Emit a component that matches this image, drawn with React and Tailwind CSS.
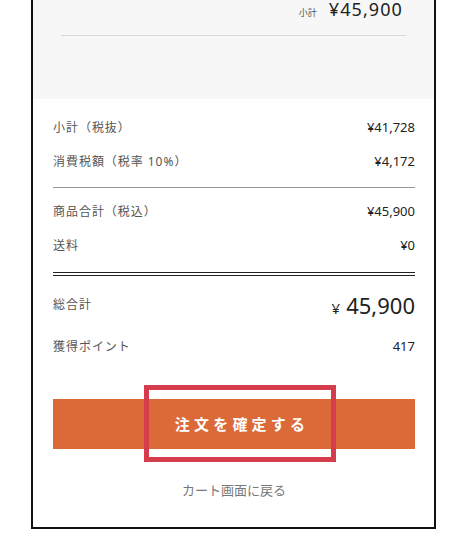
import React from 'react';

const rows = [
	{ label: '小計（税抜）', value: '¥41,728' },
	{ label: '消費税額（税率 10%）', value: '¥4,172' },
];

const rows2 = [
	{ label: '商品合計（税込）', value: '¥45,900' },
	{ label: '送料', value: '¥0' },
];

const font = { fontFamily: '"Noto Sans", "Noto Sans CJK JP", sans-serif' };

const Row = ({ label, value }) => (
	<div className="flex h-[34px] items-center justify-between">
		<span className="text-[12px] tracking-[0.08em] text-[#555]">{label}</span>
		<span className="text-[13px] text-[#222]">{value}</span>
	</div>
);

const App = () => {
	return (
		<div className="h-[560px] overflow-hidden bg-white" style={font}>
			<div className="ml-[31px] w-[405px] border-x-2 border-b-2 border-[#111]">
				{/* Cart items total */}
				<div className="flex h-[99px] flex-col bg-[#f7f7f7] px-[28px]">
					<div className="-mt-[3px] flex h-[24px] items-baseline justify-end pr-[3px]">
						<span className="mr-[12px] text-[9px] text-[#555]">小計</span>
						<span className="text-[18px] leading-[24px] tracking-[0.06em] text-[#222]">¥45,900</span>
					</div>
					<div className="mt-[14px] border-t border-[#d9d9d9]" />
				</div>

				{/* Summary */}
				<div className="pl-[20px] pr-[19px] pt-[12px] pb-[26px]">
					{rows.map((row) => (
						<Row key={row.label} {...row} />
					))}
					<div className="mt-[8px] mb-[7px] border-t border-[#999]" />
					{rows2.map((row) => (
						<Row key={row.label} {...row} />
					))}
					<div className="mt-[9px] h-[4px] border-y border-[#222]" />

					<div className="mt-[9px] flex h-[40px] items-center justify-between">
						<span className="text-[12px] tracking-[0.08em] text-[#555]">総合計</span>
						<span className="flex items-baseline text-[#222]">
							<span className="mr-[6px] text-[15px]">¥</span>
							<span className="text-[22px]">45,900</span>
						</span>
					</div>
					<div className="mt-[5px] flex h-[34px] items-center justify-between">
						<span className="text-[12px] tracking-[0.08em] text-[#555]">獲得ポイント</span>
						<span className="text-[13px] text-[#222]">417</span>
					</div>

					<div className="relative mt-[35px]">
						<button className="flex h-[50px] w-full items-center justify-center bg-[#db6a38] pl-[16px] text-[15px] font-bold tracking-[0.28em] text-white">
							注文を確定する
						</button>
						<div className="pointer-events-none absolute left-[91px] top-[-14px] h-[77px] w-[192px] border-[5px] border-[#d63d4c]" />
					</div>

					<div className="mt-[32px] flex h-[20px] items-center justify-center text-[13px] text-[#777]">
						カート画面に戻る
					</div>
				</div>
			</div>
		</div>
	);
};

export default App;
